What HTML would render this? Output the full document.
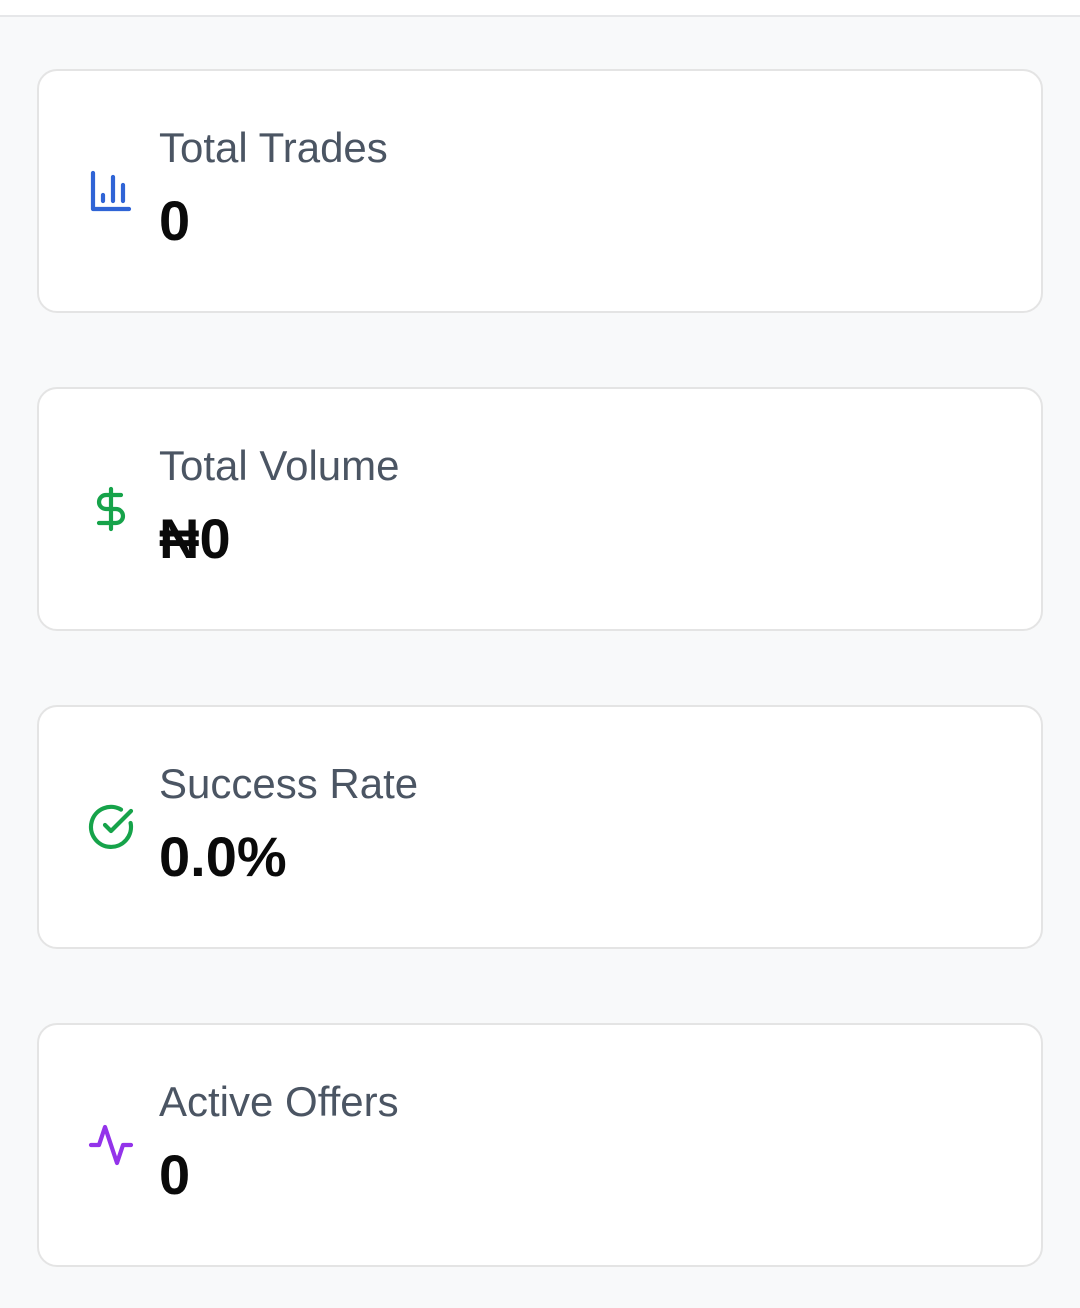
<!DOCTYPE html>
<html><head><style>
body{margin:0;width:1080px;height:1308px;background:#f8f9fa;font-family:"Liberation Sans",Roboto,sans-serif;position:relative;overflow:hidden}
.top{position:absolute;left:0;top:0;width:1080px;height:15px;background:#fff;border-bottom:2px solid #e6e7e9}
.card{position:absolute;left:37px;width:1002px;height:240px;background:#fff;border:2px solid #e4e4e4;border-radius:20px}
.card svg{position:absolute;left:48px;top:96px;width:48px;height:48px;fill:none;stroke-width:2.1;stroke-linecap:round;stroke-linejoin:round}
.lab{position:absolute;left:120px;top:53px;font-size:42px;color:#4b5563}
.val{position:absolute;left:120px;top:117px;font-size:56px;font-weight:bold;color:#0a0a0a}
</style></head><body>
<div class="top"></div>
<div class="card" style="top:69px"><svg viewBox="0 0 24 24" stroke="#2f64d6"><path d="M3 3v18h18M18 17V9M13 17V5M8 17v-3"/></svg><div class="lab">Total Trades</div><div class="val">0</div></div>
<div class="card" style="top:387px"><svg viewBox="0 0 24 24" stroke="#16a34a"><path d="M12 2v20M17 5H9.5a3.5 3.5 0 0 0 0 7h5a3.5 3.5 0 0 1 0 7H6"/></svg><div class="lab">Total Volume</div><div class="val">₦0</div></div>
<div class="card" style="top:705px"><svg viewBox="0 0 24 24" stroke="#16a34a"><path d="M21.8 10A10 10 0 1 1 17 3.3"/><path d="m9 11 3 3L22 4"/></svg><div class="lab">Success Rate</div><div class="val">0.0%</div></div>
<div class="card" style="top:1023px"><svg viewBox="0 0 24 24" stroke="#9333ea"><path d="M22 12h-4l-3 9L9 3l-3 9H2"/></svg><div class="lab">Active Offers</div><div class="val">0</div></div>
</body></html>
